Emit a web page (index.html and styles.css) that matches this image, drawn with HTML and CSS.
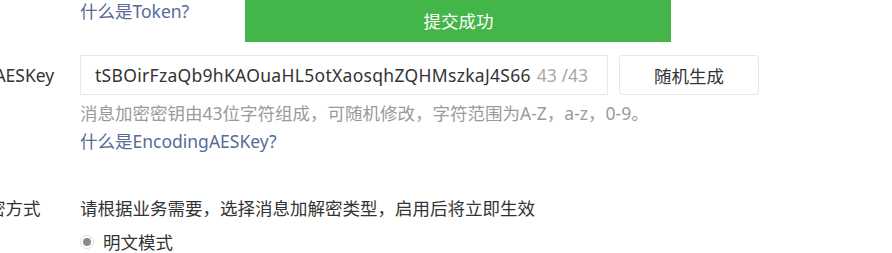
FILE: index.html
```html
<!DOCTYPE html>
<html lang="zh-CN">
<head>
<meta charset="utf-8">
<title>服务器配置</title>
<link rel="stylesheet" href="styles.css">
</head>
<body>
<div class="form">
  <div class="group group-token">
    <div class="label"></div>
    <div class="content">
      <a class="link" href="#">什么是Token?</a>
    </div>
  </div>
  <div class="group group-key">
    <div class="label label-input">EncodingAESKey</div>
    <div class="content">
      <div class="input-row">
        <div class="input">
          <span class="input-value">tSBOirFzaQb9hKAOuaHL5otXaosqhZQHMszkaJ4S66</span>
          <span class="counter">43 /43</span>
        </div>
        <button class="btn" type="button">随机生成</button>
      </div>
      <p class="hint">消息加密密钥由43位字符组成，可随机修改，字符范围为A-Z，a-z，0-9。</p>
      <a class="link link-block" href="#">什么是EncodingAESKey?</a>
    </div>
  </div>
  <div class="group group-mode">
    <div class="label">消息加解密方式</div>
    <div class="content">
      <p class="desc">请根据业务需要，选择消息加解密类型，启用后将立即生效</p>
      <label class="radio">
        <span class="radio-icon"></span>
        <span class="radio-text">明文模式</span>
      </label>
    </div>
  </div>
</div>
<div class="toast">提交成功</div>
</body>
</html>
```

FILE: styles.css
```css
html, body {
  margin: 0;
  padding: 0;
  background: #ffffff;
}
body {
  font-family: "Noto Sans", "Noto Sans CJK SC", sans-serif;
  font-size: 17.5px;
  line-height: 28px;
  color: #333333;
  overflow: hidden;
}
.form {
  margin-left: -82px;
}
.group {
  display: flex;
}
.label {
  width: 162px;
  flex: none;
  line-height: 28px;
  white-space: nowrap;
}
.label-input {
  line-height: 40px;
}
.content {
  flex: 1;
  min-width: 0;
}
.group-token {
  line-height: 22px;
  height: 22px;
  margin-bottom: 33px;
}
.group-token .link {
  line-height: 22px;
}
.link {
  color: #576b95;
  text-decoration: none;
  line-height: 28px;
}
.link-block {
  display: block;
}
.input-row {
  display: flex;
  gap: 11px;
  height: 40px;
}
.input {
  box-sizing: border-box;
  width: 528px;
  height: 40px;
  border: 1px solid #e7e7eb;
  display: flex;
  align-items: center;
  padding: 0 14px 0 14px;
  white-space: nowrap;
}
.input-value {
  color: #333333;
  letter-spacing: 0.3px;
}
.counter {
  margin-left: 6px;
  color: #a8a8a8;
}
.btn {
  box-sizing: border-box;
  width: 140px;
  height: 40px;
  border: 1px solid #e7e7eb;
  border-radius: 3px;
  background: #ffffff;
  color: #333333;
  font-family: inherit;
  font-size: 17.5px;
  padding: 0;
}
.hint {
  margin: 4px 0 0 0;
  line-height: 28px;
  color: #9a9a9a;
}
.group-mode {
  margin-top: 39px;
}
.desc {
  margin: 0;
  line-height: 28px;
}
.radio {
  display: flex;
  align-items: center;
  gap: 9px;
  margin-top: 6px;
  line-height: 28px;
  padding-left: 0;
}
.radio-icon {
  box-sizing: border-box;
  width: 14px;
  height: 14px;
  border-radius: 50%;
  border: 1px solid #dcdcdc;
  background: #ffffff;
  display: flex;
  align-items: center;
  justify-content: center;
}
.radio-icon::after {
  content: "";
  width: 8px;
  height: 8px;
  border-radius: 50%;
  background: #8a8a8a;
}
.toast {
  position: absolute;
  top: 0;
  left: 245px;
  width: 425px;
  height: 42px;
  background: #44b549;
  color: #ffffff;
  font-family: "Noto Sans CJK SC", sans-serif;
  font-size: 17.5px;
  display: flex;
  align-items: center;
  justify-content: center;
  padding-left: 1px;
}
```
